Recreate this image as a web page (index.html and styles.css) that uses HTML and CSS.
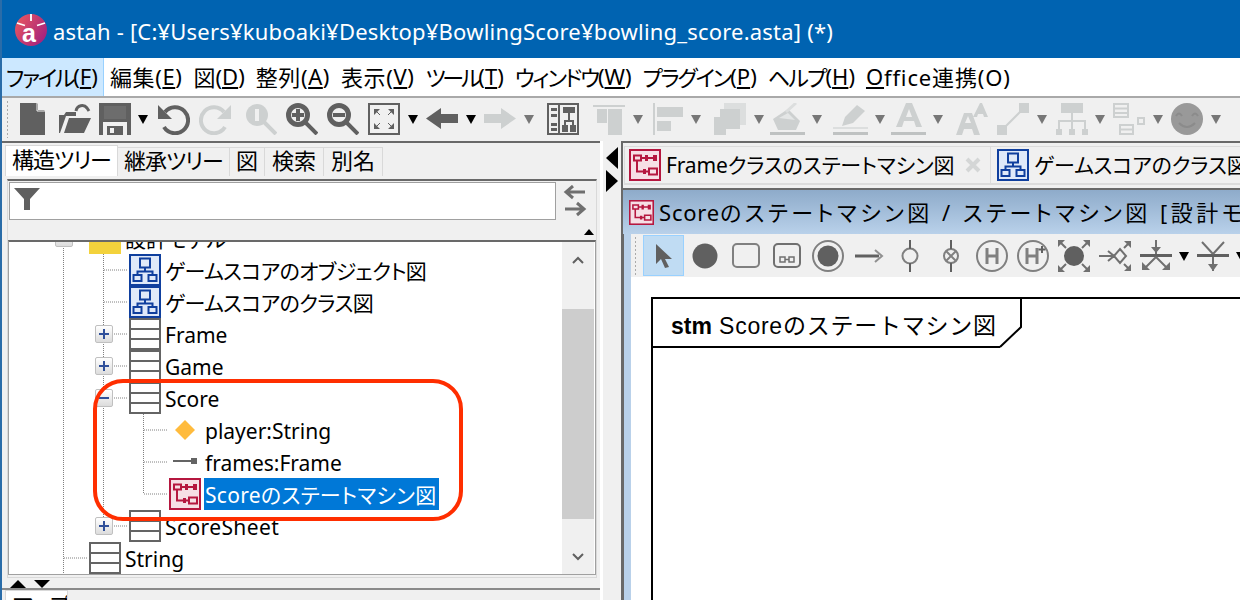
FILE: index.html
```html
<!DOCTYPE html>
<html lang="ja">
<head>
<meta charset="utf-8">
<title>astah</title>
<link rel="stylesheet" href="styles.css">
</head>
<body>
<svg class="defs" width="0" height="0" aria-hidden="true">
  <symbol id="cls" viewBox="0 0 32 32"><path d="M1 1h30v30H1z M1 11h30 M1 21h30" fill="#fff" stroke="#646464" stroke-width="2"/></symbol>
  <symbol id="dgm" viewBox="0 0 32 32"><rect x="1" y="1" width="30" height="30" fill="#dfe9f9" stroke="#0f3f9e" stroke-width="2"/><path d="M11 4.500h10v9H11z M4.500 21h8v6h-8z M19.500 21h8v6h-8z M8.500 21v-3.500h15V21 M16 13.500v4" fill="none" stroke="#0f3f9e" stroke-width="2"/></symbol>
  <symbol id="stm" viewBox="0 0 32 32"><rect x="1" y="1" width="30" height="30" fill="#f6dfe5" stroke="#b5173f" stroke-width="2"/><path d="M5 6.500h7v5H5z M20 19.500h8v6h-8z M8 11.500V22.500h12 M12 9h15" fill="none" stroke="#b5173f" stroke-width="2"/><path d="M16 6h3v6h-3z M24 6h4v6h-4z M14 20h3v5h-3z" fill="#b5173f"/></symbol>
  <symbol id="drop" viewBox="0 0 10 10"><path d="M0 1h10L5 10z"/></symbol>
</svg>

<div class="window">
  <header class="titlebar">
    <svg class="logo" viewBox="0 0 32 32"><defs><linearGradient id="lg" x1="0" y1="0.200" x2="1" y2="0.800"><stop offset="0" stop-color="#e8565f"/><stop offset="1" stop-color="#a01f80"/></linearGradient></defs><circle cx="16" cy="16" r="16" fill="url(#lg)"/><path d="M16 0v7M2 9l8 2.500M30 9l-8 2.500" stroke="#fff" stroke-width="1.800"/><text x="14" y="28" text-anchor="middle" class="logo-a">a</text></svg>
    <span class="title-text">astah - [C:¥Users¥kuboaki¥Desktop¥BowlingScore¥bowling_score.asta] (*)</span>
  </header>

  <nav class="menubar">
    <span class="menu active"><span class="kn-a">ファイル</span>(<u>F</u>)</span>
    <span class="menu kj">編集(<u>E</u>)</span>
    <span class="menu">図(<u>D</u>)</span>
    <span class="menu kj">整列(<u>A</u>)</span>
    <span class="menu kj">表示(<u>V</u>)</span>
    <span class="menu"><span class="kn-t">ツール</span>(<u>T</u>)</span>
    <span class="menu"><span class="kn-w">ウィンドウ</span>(<u>W</u>)</span>
    <span class="menu"><span class="kn-w">プラグイン</span>(<u>P</u>)</span>
    <span class="menu"><span class="kn-h">ヘルプ</span>(<u>H</u>)</span>
    <span class="menu office"><u>O</u>ffice連携(O)</span>
  </nav>

  <div class="toolbar">
    <span class="grip"></span>
    <svg class="ti" viewBox="0 0 32 32"><path d="M1 0h17l8 8v24H1z" fill="#606060"/><path d="M19 0l7 7h-7z" fill="#f0f0f0"/><path d="M18 0v8h8" fill="none" stroke="#f0f0f0"/></svg>
    <svg class="ti" viewBox="0 0 32 32"><path d="M0 30V12h5l2-3h10v4H7L1 30z" fill="#606060"/><path d="M5 30L10 15h22l-7 15z" fill="#606060"/><path d="M17 8c1-6 8-7 11-3l2 3" fill="none" stroke="#606060" stroke-width="3"/></svg>
    <svg class="ti" viewBox="0 0 32 32"><path d="M0 0h32v32H0z" fill="#606060"/><path d="M5 3h22v13H5z" fill="#6d6d6d"/><path d="M4 19h24v13H4z" fill="#f0f0f0"/><path d="M8 23h16v9H8z" fill="#606060"/><path d="M11 25h4v5h-4z" fill="#f0f0f0"/></svg>
    <svg class="ta on m-1"><use href="#drop"/></svg>
    <svg class="ti m2" viewBox="0 0 32 32"><path d="M7 9A13 13 0 1 1 6 24" fill="none" stroke="#606060" stroke-width="4"/><path d="M0 2v14h14z" fill="#606060"/></svg>
    <svg class="ti m1" viewBox="0 0 32 32"><path d="M25 9A13 13 0 1 0 26 24" fill="none" stroke="#cdd0d0" stroke-width="4"/><path d="M32 2v14H18z" fill="#cdd0d0"/></svg>
    <svg class="ti m6" viewBox="0 0 32 32"><circle cx="12" cy="12" r="11" fill="#cdd0d0"/><path d="M10 6h4v12h-4z" fill="#f0f0f0"/><path d="M19 19l12 12" stroke="#cdd0d0" stroke-width="4"/></svg>
    <svg class="ti m1" viewBox="0 0 32 32"><circle cx="12" cy="12" r="9.500" fill="#f0f0f0" stroke="#606060" stroke-width="5"/><path d="M6 10h12v4H6z M10 6h4v12h-4z" fill="#606060"/><path d="M19 19l12 12" stroke="#606060" stroke-width="4"/></svg>
    <svg class="ti m1" viewBox="0 0 32 32"><circle cx="12" cy="12" r="9.500" fill="#f0f0f0" stroke="#606060" stroke-width="5"/><path d="M6 10h12v4H6z" fill="#606060"/><path d="M19 19l12 12" stroke="#606060" stroke-width="4"/></svg>
    <svg class="ti m1" viewBox="0 0 32 32"><rect x="1" y="1" width="30" height="30" fill="#f0f0f0" stroke="#606060" stroke-width="2"/><path d="M6 6h6l-6 6z M26 6h-6l6 6z M6 26h6l-6-6z M26 26h-6l6-6z" fill="#606060"/><path d="M6 6l6 6M26 6l-6 6M6 26l6-6M26 26l-6-6" stroke="#606060"/></svg>
    <svg class="ta on"><use href="#drop"/></svg>
    <svg class="ti" viewBox="0 0 32 32"><path d="M0 15.500L15 5v6h17v9H15v6z" fill="#606060"/></svg>
    <svg class="ta on"><use href="#drop"/></svg>
    <svg class="ti" viewBox="0 0 32 32"><path d="M32 15.500L17 5v6H0v9h17v6z" fill="#cdd0d0"/></svg>
    <svg class="ta"><use href="#drop"/></svg>
    <svg class="ti m5" viewBox="0 0 32 32"><rect x="1" y="1" width="30" height="30" fill="#f0f0f0" stroke="#606060" stroke-width="2"/><path d="M12 1v30" stroke="#606060" stroke-width="2"/><path d="M4 5h6v3H4z M4 11h6v3H4z M4 20h6v3H4z M4 25h6v3H4z M16 4h12v6H16z M15 22h6v7h-6z M23 22h6v7h-6z" fill="#606060"/><path d="M22 10v8M18 22v-4h8v4" stroke="#606060" stroke-width="2" fill="none"/></svg>
    <svg class="ti m6" viewBox="0 0 32 32"><path d="M0 2h32v2H0z M4 6h10v14H4z M15 6h14v26H15z" fill="#cdd0d0"/></svg>
    <svg class="ta"><use href="#drop"/></svg>
    <svg class="ti m2" viewBox="0 0 32 32"><path d="M0 0h2v32H0z M4 4h26v10H4z M4 18h14v10H4z" fill="#cdd0d0"/></svg>
    <svg class="ta m-2"><use href="#drop"/></svg>
    <svg class="ti m5" viewBox="0 0 32 32"><path d="M10 0h22v22h-6V6H10z" fill="#dcdede"/><path d="M6 6h20v20H6z" fill="#cdd0d0"/><path d="M0 14h6v12h6v6H0z" fill="#cdd0d0"/></svg>
    <svg class="ta"><use href="#drop"/></svg>
    <svg class="tw m-2" viewBox="0 0 35 32"><path d="M3 16L18 6l12 12-4 9H8z" fill="#cdd0d0"/><path d="M9 15l9-5 7 7z" fill="#e4e6e6"/><path d="M16 9L26 0" stroke="#dcdede" stroke-width="3"/><path d="M0 29h35v3H0z" fill="#bfc2c2"/></svg>
    <svg class="ta m-1"><use href="#drop"/></svg>
    <svg class="tw m3" viewBox="0 0 35 32"><path d="M9 23l3-9L24 2l8 6-12 12z" fill="#cdd0d0"/><path d="M0 24h35v2H0z" fill="#dcdede"/><path d="M0 29h35v3H0z" fill="#bfc2c2"/></svg>
    <svg class="ta m-1"><use href="#drop"/></svg>
    <svg class="tw m-2" viewBox="0 0 35 32"><path d="M5 24L15 0h6l10 24h-6l-2-6H13l-2 6z M15 14h6l-3-8z" fill="#cdd0d0" fill-rule="evenodd"/><path d="M0 29h35v3H0z" fill="#bfc2c2"/></svg>
    <svg class="ta m-1"><use href="#drop"/></svg>
    <svg class="ti m5" viewBox="0 0 32 32"><path d="M0 32L8 10h8l8 22h-6l-2-6H8l-2 6z M9 20h6l-3-7z" fill="#cdd0d0" fill-rule="evenodd"/><path d="M17 14L24 0h2l6 14h-4l-1-3h-5l-1 3z" fill="#cdd0d0"/></svg>
    <svg class="ti m1" viewBox="0 0 32 32"><path d="M0 22h10v10H0z M22 0h10v10H22z" fill="#cdd0d0"/><path d="M9 23L23 9" stroke="#cdd0d0" stroke-width="2"/></svg>
    <svg class="ta"><use href="#drop"/></svg>
    <svg class="ti m1" viewBox="0 0 32 32"><path d="M5 0h22v10H5z M0 26h6v6H0z M13 26h6v6h-6z M26 26h6v6h-6z" fill="#cdd0d0"/><path d="M16 10v16M3 26v-8h26v8" fill="none" stroke="#cdd0d0" stroke-width="2"/></svg>
    <svg class="ta m-1"><use href="#drop"/></svg>
    <svg class="ti" viewBox="0 0 32 32"><path d="M1 1h14v13H1z M7 22h13v9H7z M25 15h6v6h-6z" fill="#f0f0f0" stroke="#cdd0d0" stroke-width="2"/><path d="M1 5.500h14M1 10h14M7 26.500h13" stroke="#cdd0d0" stroke-width="2"/></svg>
    <svg class="ta"><use href="#drop"/></svg>
    <svg class="ti" viewBox="0 0 32 32"><circle cx="16" cy="16" r="16" fill="#999"/><path d="M5 13q3-5 6 0M21 13q3-5 6 0M8 20q8 8 16 0" fill="none" stroke="#8b8b8b" stroke-width="2"/></svg>
    <svg class="ta"><use href="#drop"/></svg>
  </div>

  <main class="workspace">
    <section class="left">
      <div class="ltabs">
        <span class="ltab active kn">構造ツリー</span>
        <span class="ltab kn">継承ツリー</span>
        <span class="ltab">図</span>
        <span class="ltab wider">検索</span>
        <span class="ltab wider">別名</span>
      </div>
      <div class="lpanel">
        <div class="filter">
          <div class="filter-input">
            <svg class="funnel" viewBox="0 0 26 22"><path d="M0 0h26L16 11v11h-6V11z" fill="#606060"/></svg>
          </div>
          <svg class="swap" viewBox="0 0 24 32"><path d="M22 7H3M10 1L3 7l7 6M2 24h19M14 18l7 6-7 6" fill="none" stroke="#6f6f6f" stroke-width="3"/></svg>
        </div>
        <div class="collapse"><span class="tri-up"></span></div>
        <div class="treebox">
          <div class="tree">
            <svg class="guides" width="553" height="332"><g stroke="#808080" stroke-dasharray="1 1" fill="none"><path d="M54.500 0V332 M94.500 0V283 M134.500 172V252 M95 28h24M95 60h24M95 92h24M95 124h24M95 156h24M95 284h24M55 316h24M135 188h24M135 220h24M135 252h24"/></g></svg>
            <div class="row l0 clip"><span class="tog"></span><span class="folder"></span><span class="lbl">設計モデル</span></div>
            <div class="row l1"><svg class="ic"><use href="#dgm"/></svg><span class="lbl kn-s">ゲームスコアのオブジェクト図</span></div>
            <div class="row l1"><svg class="ic"><use href="#dgm"/></svg><span class="lbl kn-s">ゲームスコアのクラス図</span></div>
            <div class="row l1"><span class="tog plus"></span><svg class="ic"><use href="#cls"/></svg><span class="lbl">Frame</span></div>
            <div class="row l1"><span class="tog plus"></span><svg class="ic"><use href="#cls"/></svg><span class="lbl">Game</span></div>
            <div class="row l1"><span class="tog minus"></span><svg class="ic"><use href="#cls"/></svg><span class="lbl">Score</span></div>
            <div class="row l2"><svg class="ic" viewBox="0 0 32 32"><path d="M16 6L26 16 16 26 6 16z" fill="#ffbb3d"/></svg><span class="lbl">player:String</span></div>
            <div class="row l2"><svg class="ic" viewBox="0 0 32 32"><path d="M4 15h24" stroke="#646464" stroke-width="2"/><path d="M22 12h6v6h-6z" fill="#646464"/></svg><span class="lbl">frames:Frame</span></div>
            <div class="row l2"><svg class="ic"><use href="#stm"/></svg><span class="lbl sel">Scoreのステートマシン図</span></div>
            <div class="row l1"><span class="tog plus"></span><svg class="ic"><use href="#cls"/></svg><span class="lbl sheet">ScoreSheet</span></div>
            <div class="row l0"><svg class="ic"><use href="#cls"/></svg><span class="lbl">String</span></div>
          </div>
          <div class="vscroll">
            <svg class="chev up" viewBox="0 0 12 8"><path d="M1 7l5-5 5 5" fill="none" stroke="#606060" stroke-width="2"/></svg>
            <div class="track"><div class="thumb"></div></div>
            <svg class="chev down" viewBox="0 0 12 8"><path d="M1 1l5 5 5-5" fill="none" stroke="#606060" stroke-width="2"/></svg>
          </div>
        </div>
      </div>
      <div class="hsplit"><span class="tri-up big"></span><span class="tri-down big"></span></div>
      <div class="btabs"><span class="btab">マップ</span></div>
    </section>

    <div class="splitter">
      <span class="tri-left"></span>
      <span class="tri-right"></span>
    </div>

    <section class="right">
      <div class="rtabs">
        <div class="rtab"><svg class="ic"><use href="#stm"/></svg><span class="rtab-t">Frameクラスのステートマシン図</span>
          <svg class="close" viewBox="0 0 16 16"><path d="M2 2l12 12M14 2L2 14" stroke="#d4d6d6" stroke-width="4"/></svg></div>
        <div class="rtab"><svg class="ic"><use href="#dgm"/></svg><span class="rtab-t">ゲームスコアのクラス図</span></div>
      </div>
      <div class="iframe-head"><svg class="ic small"><use href="#stm"/></svg><span class="if-title"><span class="latin">Score</span>のステートマシン図 / ステートマシン図 [設計モデル]</span></div>
      <div class="iframe-body">
        <div class="stm-tools">
          <span class="grip short"></span>
          <span class="st-btn sel"><svg viewBox="0 0 32 32"><path d="M8 4l16 15h-7l4 8-4 1-4-9-5 5z" fill="#606060"/></svg></span>
          <span class="st-btn"><svg viewBox="0 0 32 32"><circle cx="16" cy="16" r="12.500" fill="#606060"/></svg></span>
          <span class="st-btn"><svg viewBox="0 0 32 32"><rect x="3" y="4" width="26" height="23" rx="4" fill="none" stroke="#808080" stroke-width="2"/></svg></span>
          <span class="st-btn"><svg viewBox="0 0 32 32"><rect x="3" y="4" width="26" height="23" rx="4" fill="none" stroke="#707070" stroke-width="2"/><path d="M9 17h5v5H9z M18 17h5v5h-5z M14 19.500h4" fill="none" stroke="#707070" stroke-width="1.500"/></svg></span>
          <span class="st-btn"><svg viewBox="0 0 32 32"><circle cx="16" cy="16" r="15" fill="none" stroke="#808080" stroke-width="2"/><circle cx="16" cy="16" r="10.500" fill="#606060"/></svg></span>
          <span class="st-btn"><svg viewBox="0 0 32 32"><path d="M2 16h24" stroke="#606060" stroke-width="3"/><path d="M22 10l7 6-7 6" fill="none" stroke="#909090" stroke-width="2"/></svg></span>
          <span class="st-btn"><svg viewBox="0 0 32 32"><circle cx="16" cy="16" r="7.500" fill="none" stroke="#808080" stroke-width="2"/><path d="M16 0v9M16 23v9" stroke="#606060" stroke-width="2"/></svg></span>
          <span class="st-btn"><svg viewBox="0 0 32 32"><circle cx="16" cy="16" r="7" fill="none" stroke="#808080" stroke-width="2"/><path d="M11 11l10 10M21 11L11 21" stroke="#808080" stroke-width="2"/><path d="M16 0v9M16 23v9" stroke="#606060" stroke-width="2"/></svg></span>
          <span class="st-btn"><svg viewBox="0 0 32 32"><circle cx="16" cy="16" r="15" fill="none" stroke="#808080" stroke-width="2"/><path d="M11 8v16M21 8v16M11 16h10" stroke="#808080" stroke-width="3"/></svg></span>
          <span class="st-btn"><svg viewBox="0 0 32 32"><circle cx="16" cy="16" r="15" fill="none" stroke="#808080" stroke-width="2"/><path d="M10 8v16M20 8v16M10 16h10" stroke="#808080" stroke-width="3"/><path d="M25 6v7M21.500 9.500h7" stroke="#606060" stroke-width="2"/></svg></span>
          <span class="st-btn"><svg viewBox="0 0 32 32"><circle cx="16" cy="16" r="10" fill="#606060"/><path d="M1 1l7 7M31 1l-7 7M1 31l7-7M31 31l-7-7" stroke="#707070" stroke-width="2"/><path d="M0 0h7L0 7z M32 0h-7l7 7z M0 32h7l-7-7z M32 32h-7l7-7z" fill="#707070"/></svg></span>
          <span class="st-btn"><svg viewBox="0 0 32 32"><path d="M0 16h14M9 11l6 5-6 5M15 16l6-7 6 7-6 7z" fill="none" stroke="#707070" stroke-width="2"/><path d="M25 8l5-5M25 24l5 5" stroke="#707070" stroke-width="2"/><path d="M25 1h7v7z M25 31h7v-7z" fill="#707070"/></svg></span>
          <span class="st-btn"><svg viewBox="0 0 32 32"><path d="M0 14h32v3H0z" fill="#606060"/><path d="M16 0v14M16 17L5 28M16 17l11 11" stroke="#707070" stroke-width="2"/><path d="M11 7h10l-5 6z M2 22v8h8z M30 22v8h-8z" fill="#707070"/></svg></span>
          <svg class="ta on sm"><use href="#drop"/></svg>
          <span class="st-btn"><svg viewBox="0 0 32 32"><path d="M0 14h32v3H0z" fill="#606060"/><path d="M16 17v14M16 14L5 2M16 14L27 2" stroke="#707070" stroke-width="2"/><path d="M11 24h10l-5 7z" fill="#707070"/></svg></span>
          <svg class="ta on sm"><use href="#drop"/></svg>
        </div>
        <div class="canvas">
          <div class="frame">
            <div class="frame-label"><b>stm</b> Scoreのステートマシン図</div>
            <svg class="frame-notch" width="24" height="50" viewBox="0 0 24 50"><path d="M1 48L22 28V0" fill="none" stroke="#000" stroke-width="2"/></svg>
          </div>
        </div>
      </div>
    </section>
  </main>
</div>

<div class="highlight"></div>
</body>
</html>
```

FILE: styles.css
```css
* { box-sizing: border-box; }
html, body { margin: 0; height: 100%; overflow: hidden; background: #f0f0f0; }
body { font-family: "Noto Sans", "Noto Sans CJK JP", sans-serif; color: #000; position: relative; }
.defs { position: absolute; }
.window { width: 1240px; height: 600px; display: flex; flex-direction: column; border-left: 2px solid #2a6ca8; overflow: hidden; }

/* title */
.titlebar { height: 58px; flex: none; background: #0063b1; display: flex; align-items: center; padding: 2px 0 0 15px; margin-left: -2px; }
.logo { width: 32px; height: 32px; flex: none; }
.logo-a { font: bold 25px "Liberation Sans", sans-serif; fill: #fff; }
.title-text { color: #fff; font-size: 22px; margin: 2px 0 0 6px; white-space: pre; letter-spacing: .2px; }

/* menu */
.menubar { height: 40px; flex: none; background: #fff; border-bottom: 2px solid #a9a9a9; display: flex; font-size: 22px; font-feature-settings: "palt"; }
.menu { display: flex; align-items: center; padding: 0 5px 2px 6px; white-space: pre; }
.menu.active { background: #cce8ff; border-right: 1px solid #99d1ff; padding: 0 4px 2px; width: 102px; }
.menu u { text-underline-offset: 2px; }
.menu.kj { letter-spacing: .6px; }
.menu.office { letter-spacing: .85px; }
.kn-a { letter-spacing: -2.250px; }
.kn-t { letter-spacing: -3.200px; }
.kn-w { letter-spacing: -2.100px; }
.kn-h { letter-spacing: -1.800px; }

/* toolbar */
.toolbar { height: 43px; flex: none; background: #f0f0f0; display: flex; align-items: center; gap: 8px; padding-bottom: 1px; }
.grip { width: 4px; height: 38px; margin: 0 1px 0 4px; flex: none; background-image: radial-gradient(#aaa 1px, transparent 1px); background-size: 3px 4px; }
.ti { width: 32px; height: 32px; flex: none; }
.tw { width: 35px; height: 32px; flex: none; }
.ta { width: 10px; height: 10px; flex: none; fill: #777; }
.ta.on { fill: #000; }
.m-2 { margin-left: -2px; }
.m-1 { margin-left: -1px; }
.m1 { margin-left: 1px; }
.m2 { margin-left: 2px; }
.m3 { margin-left: 3px; }
.m5 { margin-left: 5px; }
.m6 { margin-left: 6px; }

/* workspace */
.workspace { flex: 1; min-height: 0; display: flex; }
.left { width: 598px; flex: none; display: flex; flex-direction: column; background: #f0f0f0; border-top: 2px solid #696969; }

.ltabs { height: 33px; flex: none; display: flex; align-items: flex-end; padding-left: 3px; font-size: 22px; font-feature-settings: "palt"; }
.ltab { height: 29px; display: flex; align-items: center; justify-content: center; border: 1px solid #d9d9d9; border-bottom: 0; border-left: 0; padding: 0 6px 5px; background: #f0f0f0; line-height: 1; white-space: nowrap; }
.ltab.kn { letter-spacing: -1px; }
.ltab.wider { padding: 0 7px 5px; }
.ltab.active { height: 31px; background: #fff; border-left: 1px solid #d9d9d9; padding: 0 6px 5px; }

.lpanel { flex: 1; min-height: 0; margin: 3px 3px 0 5px; border: 1px solid #d9d9d9; border-top: 2px solid #696969; padding-bottom: 2px; display: flex; flex-direction: column; }
.filter { height: 38px; flex: none; display: flex; align-items: center; margin-top: 1px; padding-left: 1px; }
.filter-input { width: 547px; height: 38px; background: #fff; border: 1px solid #a0a0a0; display: flex; align-items: center; padding-left: 4px; }
.funnel { width: 26px; height: 22px; margin-top: -5px; }
.swap { width: 24px; height: 32px; margin-left: 7px; }
.collapse { height: 20px; flex: none; display: flex; justify-content: flex-end; align-items: center; padding: 3px 2px 0 0; }
.tri-up { width: 0; height: 0; border: 5.500px solid transparent; border-top: 0; border-bottom: 6px solid #000; }
.treebox { flex: 1; min-height: 0; background: #fff; border: 1px solid #a0a0a0; border-top: 2px solid #696969; display: flex; }
.tree { flex: 1; min-width: 0; position: relative; overflow: hidden; font-size: 21px; font-feature-settings: "palt"; }
.guides { position: absolute; left: 0; top: 0; }
.row { height: 32px; display: flex; align-items: center; position: relative; white-space: nowrap; }
.row.clip { height: 12px; align-items: flex-end; }
.row.l0 { padding-left: 80px; }
.row.l1 { padding-left: 120px; }
.row.l2 { padding-left: 160px; }
.ic { width: 32px; height: 32px; flex: none; position: relative; }
.lbl { margin-left: 2px; height: 32px; line-height: 30px; padding: 2px 2px 0; }
.kn-s { letter-spacing: -.65px; }
.sheet { letter-spacing: .4px; }
.lbl.sel { background: #0078d7; color: #fff; letter-spacing: .3px; margin-left: 3px; padding-left: 1px; }
.folder { width: 32px; height: 13px; background: #f3d23c; flex: none; }
.tog { position: absolute; left: 86px; top: 7px; width: 18px; height: 18px; border: 1px solid #c0c0c0; border-radius: 2px; background: linear-gradient(#fff, #dcdcdc); }
.clip .tog { left: 46px; top: -13px; }
.tog.plus::before, .tog.minus::before { content: ""; position: absolute; left: 3px; top: 7px; width: 10px; height: 2px; background: #30509a; }
.tog.plus::after { content: ""; position: absolute; left: 7px; top: 3px; width: 2px; height: 10px; background: #30509a; }
.vscroll { width: 32px; flex: none; background: #f0f0f0; display: flex; flex-direction: column; align-items: center; margin-right: 1px; }
.chev { width: 12px; height: 8px; flex: none; }
.chev.up { margin: 14px 0 15px; }
.chev.down { margin: 0 0 13px; }
.track { flex: 1; align-self: stretch; padding-top: 30px; }
.thumb { height: 210px; background: #cdcdcd; }

.hsplit { height: 12px; flex: none; display: flex; align-items: flex-start; gap: 8px; padding: 2px 0 0 8px; border-bottom: 2px solid #8a8a8a; }
.tri-up.big { border-width: 0 8px 8px; border-color: transparent transparent #000; }
.tri-down { width: 0; height: 0; border-style: solid; border-width: 8px 8px 0; border-color: #000 transparent transparent; }
.btabs { height: 10px; flex: none; padding-left: 3px; overflow: hidden; }
.btab { display: block; width: 63px; height: 30px; background: #fff; border: 1px solid #d9d9d9; font-size: 22px; line-height: 22px; padding: 2px 0 0 7px; white-space: nowrap; overflow: hidden; font-feature-settings: "palt"; }

.splitter { width: 21px; flex: none; border-left: 3px solid #fff; display: flex; flex-direction: column; padding: 6px 0 0 3px; gap: 1px; }
.tri-left { width: 0; height: 0; border-style: solid; border-width: 11.500px 12px 11.500px 0; border-color: transparent #000 transparent transparent; }
.tri-right { width: 0; height: 0; border-style: solid; border-width: 11.500px 0 11.500px 12px; border-color: transparent transparent transparent #000; }

.right { flex: 1; min-width: 0; display: flex; flex-direction: column; border-left: 2px solid #696969; border-top: 2px solid #696969; overflow: hidden; }
.rtabs { height: 47px; flex: none; display: flex; border-bottom: 2px solid #696969; padding: 3px 0 0 1px; background: #f0f0f0; white-space: nowrap; }
.rtab { height: 39px; display: flex; align-items: center; border: 1px solid #dcdcdc; border-width: 1px 1px 2px 0; padding: 0 0 0 6px; font-size: 21px; font-feature-settings: "palt"; flex: none; }
.rtab:first-child { border-left: 1px solid #dcdcdc; width: 367px; padding-left: 4px; }
.rtab-t { margin: -2px 0 0 5px; letter-spacing: -.15px; }
.close { width: 16px; height: 16px; margin-left: 11px; }
.iframe-head { height: 44px; flex: none; background: linear-gradient(#8eabca, #b9d1ea); display: flex; align-items: center; padding-left: 6px; white-space: nowrap; font-size: 22px; font-feature-settings: "palt"; }
.ic.small { width: 25px; height: 25px; }
.if-title { margin: -2px 0 0 5px; letter-spacing: 3.500px; }
.latin { letter-spacing: .8px; }
.iframe-body { flex: 1; min-height: 0; border-left: 8px solid #b9d1ea; display: flex; flex-direction: column; background: #fff; position: relative; }
.iframe-body::before { content: ""; position: absolute; left: -8px; top: 0; bottom: 0; width: 1px; background: #696969; }
.stm-tools { height: 43px; flex: none; background: #f0f0f0; display: flex; align-items: center; white-space: nowrap; overflow: hidden; }
.grip.short { height: 40px; margin: 0 5px 0 3px; }
.st-btn { width: 41px; height: 41px; flex: none; display: flex; align-items: center; justify-content: center; }
.st-btn svg { width: 32px; height: 32px; }
.st-btn.sel { background: #c0dcf3; border: 1px solid #99d1ff; }
.ta.sm { margin: 0 3px; }
.canvas { flex: 1; padding: 20px 0 0 20px; background: #fff; overflow: hidden; }
.frame { position: relative; height: 400px; border: solid #000; border-width: 2px 0 0 2px; margin-right: -20px; }
.frame-label { height: 49px; width: 347px; border-bottom: 2px solid #000; font: 23px/54px "Liberation Sans", "Noto Sans CJK JP", sans-serif; padding-left: 18px; white-space: nowrap; letter-spacing: .75px; }
.frame-label b { letter-spacing: 0; }
.frame-notch { position: absolute; left: 346px; top: 0; }

.highlight { position: absolute; left: 93px; top: 379px; width: 370px; height: 142px; border: 4px solid #ff2e00; border-radius: 30px; }
```
